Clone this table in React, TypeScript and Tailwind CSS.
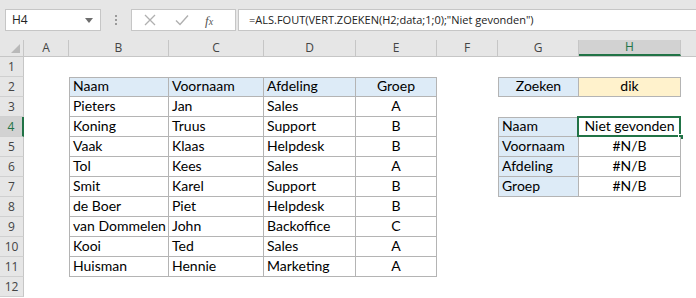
import React from "react";

const cols = [
  { w: 45, l: "A" },
  { w: 100, l: "B" },
  { w: 95, l: "C" },
  { w: 92, l: "D" },
  { w: 81, l: "E" },
  { w: 61, l: "F" },
  { w: 81, l: "G" },
  { w: 102, l: "H" },
];

const data = [
  ["Naam", "Voornaam", "Afdeling", "Groep"],
  ["Pieters", "Jan", "Sales", "A"],
  ["Koning", "Truus", "Support", "B"],
  ["Vaak", "Klaas", "Helpdesk", "B"],
  ["Tol", "Kees", "Sales", "A"],
  ["Smit", "Karel", "Support", "B"],
  ["de Boer", "Piet", "Helpdesk", "B"],
  ["van Dommelen", "John", "Backoffice", "C"],
  ["Kooi", "Ted", "Sales", "A"],
  ["Huisman", "Hennie", "Marketing", "A"],
];

const font = { fontFamily: "Lato, 'Open Sans', sans-serif" };
const uiFont = { fontFamily: "'Open Sans', 'Noto Sans', sans-serif" };

type CellSpec = {
  text?: string;
  align?: "left" | "center";
  bg?: string;
  border?: { t?: boolean; l?: boolean; r?: boolean; b?: boolean };
  selected?: boolean;
};

function getCell(row: number, col: number): CellSpec {
  if (row >= 2 && row <= 11 && col >= 1 && col <= 4) {
    const r = data[row - 2];
    return {
      text: r[col - 1],
      align: col === 4 ? "center" : "left",
      bg: row === 2 ? "bg-[#ddebf7]" : "bg-white",
      border: { t: row === 2, l: col === 1, r: true, b: true },
    };
  }
  if (row === 2 && col === 6)
    return { text: "Zoeken", align: "center", bg: "bg-[#ddebf7]", border: { t: true, l: true, r: true, b: true } };
  if (row === 2 && col === 7)
    return { text: "dik", align: "center", bg: "bg-[#fff2cc]", border: { t: true, r: true, b: true } };
  if (row >= 4 && row <= 7 && col === 6) {
    const t = ["Naam", "Voornaam", "Afdeling", "Groep"][row - 4];
    return { text: t, align: "left", bg: "bg-[#ddebf7]", border: { t: row === 4, l: true, r: true, b: true } };
  }
  if (row >= 4 && row <= 7 && col === 7) {
    const t = row === 4 ? "Niet gevonden" : "#N/B";
    return { text: t, align: "center", bg: "bg-white", border: { t: row === 4, r: true, b: true }, selected: row === 4 };
  }
  return {};
}

function Cell({ spec, width }: { spec: CellSpec; width: number }) {
  const b = spec.border || {};
  const cls = [
    "relative h-[20px] shrink-0 flex items-end pb-[1px] text-[14px] leading-[18px] text-black whitespace-nowrap overflow-visible",
    spec.bg || "",
    b.t ? "border-t" : "",
    b.l ? "border-l" : "",
    b.r ? "border-r" : "",
    b.b ? "border-b" : "",
    "border-[#b4b4b4]",
    spec.align === "center" ? "justify-center" : "pl-[3px]",
  ].join(" ");
  return (
    <div className={cls} style={{ width, ...font }}>
      {spec.text}
      {spec.selected && (
        <>
          <div className="absolute -left-[2px] -top-[2px] -right-[1px] -bottom-[1px] border-2 border-[#217346] pointer-events-none" />
          <div className="absolute -right-[4px] -bottom-[4px] w-[6px] h-[6px] bg-[#217346] border border-white" />
        </>
      )}
    </div>
  );
}

export default function App() {
  return (
    <div className="w-[696px] h-[298px] overflow-hidden bg-white relative select-none">
      {/* Formula bar */}
      <div className="h-[40px] bg-[#e6e6e6] flex items-start pt-[9px] pl-[5px]">
        <div className="w-[96px] h-[22px] bg-white border border-[#c6c6c6] flex items-center justify-between px-[6px]" style={uiFont}>
          <span className="text-[12px] text-[#222]">H4</span>
          <svg width="8" height="5" viewBox="0 0 8 5" className="mr-[1px]">
            <path d="M0 0 L8 0 L4 5 Z" fill="#6e6e6e" />
          </svg>
        </div>
        <div className="w-[30px] h-[22px] flex flex-col items-center justify-center gap-[2px]">
          <div className="w-[2px] h-[2px] bg-[#9a9a9a]" />
          <div className="w-[2px] h-[2px] bg-[#9a9a9a]" />
          <div className="w-[2px] h-[2px] bg-[#9a9a9a]" />
        </div>
        <div className="w-[105px] h-[22px] bg-white border border-[#c6c6c6] flex items-center">
          <svg width="12" height="12" viewBox="0 0 12 12" className="ml-[12px]">
            <path d="M1 1 L11 11 M11 1 L1 11" stroke="#b0b0b0" strokeWidth="1.3" />
          </svg>
          <svg width="14" height="12" viewBox="0 0 14 12" className="ml-[19px]">
            <path d="M1 6.5 L5 10.5 L13 1.5" stroke="#b0b0b0" strokeWidth="1.4" fill="none" />
          </svg>
          <span className="ml-[16px] text-[13px] italic text-[#555] leading-none" style={{ fontFamily: "'Liberation Serif', serif" }}>
            f<span className="text-[10px]">x</span>
          </span>
        </div>
        <div className="ml-[2px] flex-1 h-[22px] bg-white border-y border-l border-[#c6c6c6] flex items-center pl-[10px]">
          <span className="text-[11px] text-[#222] whitespace-nowrap" style={uiFont}>
            =ALS.FOUT(VERT.ZOEKEN(H2;data;1;0);"Niet gevonden")
          </span>
        </div>
      </div>

      {/* Column headers */}
      <div className="flex h-[17px] bg-[#e6e6e6] border-b border-[#c6c6c6]">
        <div className="w-[24px] shrink-0 border-r border-[#c6c6c6] relative bg-[#e6e6e6]">
          <svg width="9" height="9" viewBox="0 0 9 9" className="absolute right-[3px] bottom-[3px]">
            <path d="M9 0 L9 9 L0 9 Z" fill="#b9b9b9" />
          </svg>
        </div>
        {cols.map((c) => (
          <div
            key={c.l}
            className={
              "shrink-0 flex items-center justify-center text-[12px] border-r border-[#c6c6c6] " +
              (c.l === "H" ? "bg-[#d2d2d2] text-[#217346] border-b-2 border-b-[#217346]" : "text-[#444]")
            }
            style={{ width: c.w, ...uiFont }}
          >
            {c.l}
          </div>
        ))}
        <div className="flex-1 bg-[#e6e6e6]" />
      </div>

      {/* Rows */}
      {Array.from({ length: 12 }, (_, i) => i + 1).map((row) => (
        <div key={row} className="flex h-[20px]">
          <div
            className={
              "w-[24px] shrink-0 h-[20px] flex items-center justify-center text-[12px] border-b border-[#d0d0d0] " +
              (row === 4
                ? "bg-[#d2d2d2] text-[#217346] border-r-2 border-r-[#217346]"
                : "bg-[#e6e6e6] text-[#444] border-r border-r-[#c6c6c6]")
            }
            style={uiFont}
          >
            {row}
          </div>
          {cols.map((c, ci) => (
            <Cell key={c.l} spec={getCell(row, ci)} width={c.w} />
          ))}
          <div className="flex-1" />
        </div>
      ))}
    </div>
  );
}
